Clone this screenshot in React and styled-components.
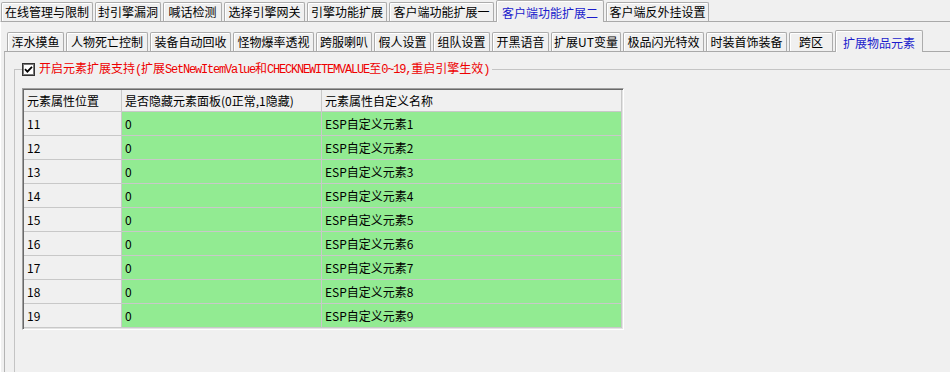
import React from "react";
import styled, { createGlobalStyle } from "styled-components";

const Global = createGlobalStyle`
  html, body { margin: 0; padding: 0; background: #f0f0f0; }
  body {
    font-family: "Noto Sans CJK SC", "Noto Sans", sans-serif;
    font-size: 12px;
    color: #000;
  }
`;

const Window = styled.div`
  width: 950px;
  height: 372px;
  overflow: hidden;
  background: #f0f0f0;
  display: flex;
  flex-direction: column;
`;

const TabStrip = styled.div`
  flex: none;
  display: flex;
  align-items: flex-end;
  gap: 2px;
  height: ${(p) => p.$h}px;
  padding-left: ${(p) => p.$pad}px;
  position: relative;
  z-index: 1;
`;

const Tab = styled.div`
  flex: none;
  box-sizing: border-box;
  width: ${(p) => p.$w}px;
  height: ${(p) => (p.$active ? 22 : 19)}px;
  margin-bottom: ${(p) => (p.$active ? -1 : 0)}px;
  padding-top: ${(p) => (p.$active ? 2 : 0)}px;
  border: 1px solid #acacac;
  border-bottom: none;
  border-radius: 2px 2px 0 0;
  box-shadow: inset 1px 1px 0 #ffffff;
  background: #f0f0f0;
  display: flex;
  align-items: center;
  justify-content: center;
  font-size: 12px;
  line-height: 14px;
  white-space: nowrap;
  color: ${(p) => (p.$active ? "#1b1bcc" : "#000")};
`;

const Panel = styled.div`
  flex: 1;
  min-height: 0;
  display: flex;
  flex-direction: column;
  border-top: 1px solid #a9a9a9;
  border-left: 1px solid ${(p) => p.$edge};
  padding-left: ${(p) => p.$padLeft}px;
`;

const GroupBox = styled.fieldset`
  margin: 9px 0 0 9px;
  width: 960px;
  flex: 1;
  min-height: 0;
  padding: 11px 0 0 7px;
  border: 1px solid #c4c4c4;
  border-right: none;
  border-bottom: none;
  box-sizing: border-box;
`;

const Legend = styled.legend`
  display: flex;
  align-items: center;
  gap: 4px;
  height: 16px;
  padding: 0 3px 0 0;
  color: #ee0000;
  font-size: 12px;
  line-height: 16px;
  white-space: nowrap;
`;

const CheckBox = styled.span`
  flex: none;
  box-sizing: border-box;
  width: 13px;
  height: 13px;
  border: 1px solid #333;
  box-shadow: inset 0 0 0 1px #7a7a7a;
  background: #fff;
  display: inline-flex;
  align-items: center;
  justify-content: center;
`;

const Mono = styled.span`
  font-family: "Liberation Mono", monospace;
  font-size: 12px;
  letter-spacing: -1.2px;
`;

const GridFrame = styled.div`
  box-sizing: border-box;
  width: 602px;
  padding: 1px;
  border: 1px solid;
  border-color: #a0a0a0 #ffffff #ffffff #a0a0a0;
  box-shadow: inset 1px 1px 0 #696969, inset -1px -1px 0 #e3e3e3;
`;

const Grid = styled.div`
  display: grid;
  grid-template-columns: 98px 200px 300px;
  grid-template-rows: 22px;
  grid-auto-rows: 24px;
`;

const Cell = styled.div`
  box-sizing: border-box;
  border-right: 1px solid #c8c8c8;
  border-bottom: 1px solid #c8c8c8;
  padding-left: 3px;
  display: flex;
  align-items: center;
  white-space: nowrap;
  font-size: 12px;
  line-height: 14px;
  background: ${(p) => (p.$green ? "#92eb92" : "#f0f0f0")};
`;

const topTabs = [
  ["在线管理与限制", 92],
  ["封引擎漏洞", 66],
  ["喊话检测", 59],
  ["选择引擎网关", 81],
  ["引擎功能扩展", 80],
  ["客户端功能扩展一", 105],
  ["客户端功能扩展二", 108, true],
  ["客户端反外挂设置", 103],
];

const subTabs = [
  ["浑水摸鱼", 57],
  ["人物死亡控制", 82],
  ["装备自动回收", 81],
  ["怪物爆率透视", 81],
  ["跨服喇叭", 56],
  ["假人设置", 57],
  ["组队设置", 57],
  ["开黑语音", 57],
  ["扩展UT变量", 70],
  ["极品闪光特效", 81],
  ["时装首饰装备", 81],
  ["跨区", 44],
  ["扩展物品元素", 88, true],
];

const rows = Array.from({ length: 9 }, (_, i) => ({
  pos: String(11 + i),
  hide: "0",
  name: `ESP自定义元素${i + 1}`,
}));

export default function App() {
  return (
    <>
      <Global />
      <Window>
        <TabStrip $h={21} $pad={1}>
          {topTabs.map(([t, w, a]) => (
            <Tab key={t} $w={w} $active={a}>
              {t}
            </Tab>
          ))}
        </TabStrip>
        <Panel $edge="#ffffff" $padLeft={3}>
          <TabStrip $h={29} $pad={3}>
            {subTabs.map(([t, w, a]) => (
              <Tab key={t} $w={w} $active={a}>
                {t}
              </Tab>
            ))}
          </TabStrip>
          <Panel $edge="#b4b4b4" $padLeft={0}>
            <GroupBox>
              <Legend>
                <CheckBox>
                  <svg width="9" height="9" viewBox="0 0 9 9">
                    <path d="M1 4.2 L3.4 6.6 L8 1.8" fill="none" stroke="#000" strokeWidth="1.8" />
                  </svg>
                </CheckBox>
                <span>
                  开启元素扩展支持<Mono>(</Mono>扩展<Mono>SetNewItemValue</Mono>和
                  <Mono>CHECKNEWITEMVALUE</Mono>至<Mono>0~19,</Mono>重启引擎生效<Mono>)</Mono>
                </span>
              </Legend>
              <GridFrame>
                <Grid>
                  <Cell>元素属性位置</Cell>
                  <Cell>是否隐藏元素面板(0正常,1隐藏)</Cell>
                  <Cell>元素属性自定义名称</Cell>
                  {rows.map((r) => (
                    <React.Fragment key={r.pos}>
                      <Cell>{r.pos}</Cell>
                      <Cell $green>{r.hide}</Cell>
                      <Cell $green>{r.name}</Cell>
                    </React.Fragment>
                  ))}
                </Grid>
              </GridFrame>
            </GroupBox>
          </Panel>
        </Panel>
      </Window>
    </>
  );
}
